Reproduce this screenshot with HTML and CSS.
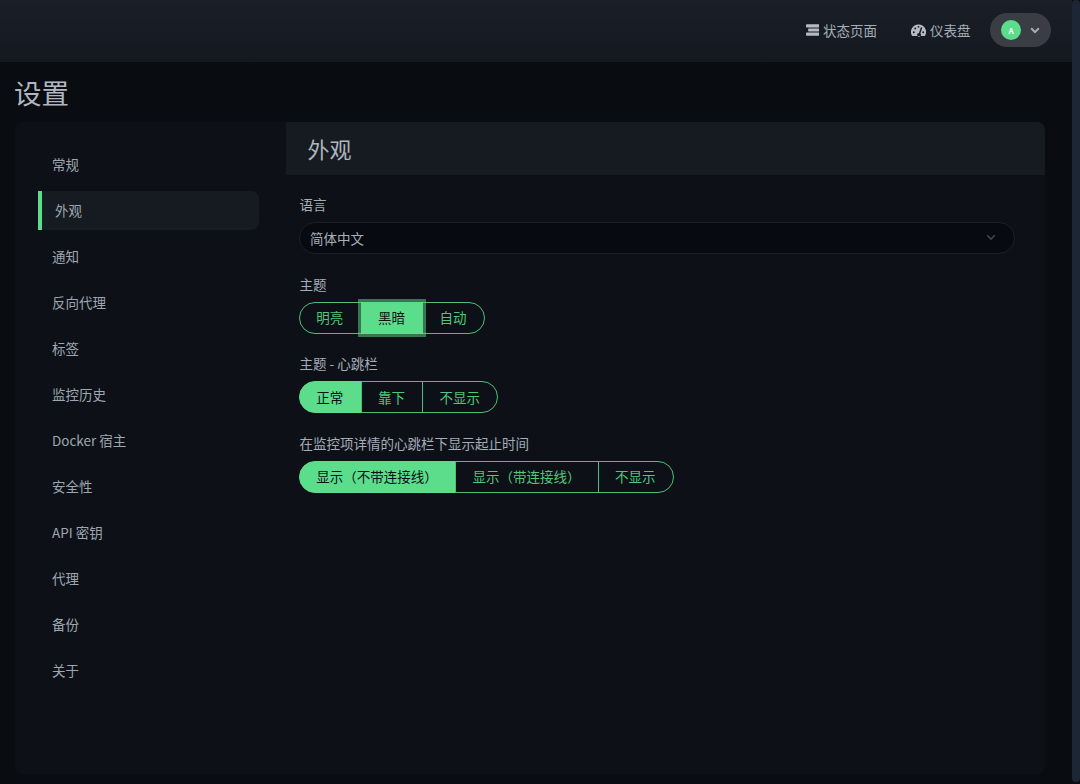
FILE: index.html
```html
<!DOCTYPE html>
<html lang="zh-CN">
<head>
<meta charset="utf-8">
<title>设置</title>
<link rel="stylesheet" href="styles.css">
</head>
<body>
<div class="app">
<header class="topbar">
  <a class="toplink"><svg class="icon" viewBox="0 0 14 12"><path d="M0.8 0H13.2a.8.8 0 0 1 .8.8v1.800a.8.8 0 0 1-.8.8H.8a.8.8 0 0 1-.8-.8V.8a.8.8 0 0 1 .8-.8zM3 4.400H13.200a.8.8 0 0 1 .8.8v1.600a.8.8 0 0 1-.8.8H3a.8.8 0 0 1-.8-.8V5.200a.8.8 0 0 1 .8-.8zM.8 8.600H13.200a.8.8 0 0 1 .8.8v1.800a.8.8 0 0 1-.8.8H.8a.8.8 0 0 1-.8-.8V9.400a.8.8 0 0 1 .8-.8z"/></svg>状态页面</a>
  <a class="toplink"><svg class="icon gauge" viewBox="0 0 16 14"><path fill-rule="evenodd" d="M8 1a8 8 0 0 0-6.900 12.050c.15.270.45.450.75.450h12.300c.3 0 .6-.180.750-.450A8 8 0 0 0 8 1zM8 2.600a1 1 0 1 1 0 2 1 1 0 0 1 0-2zM3 10.400a1 1 0 1 1 0-2 1 1 0 0 1 0 2zM4.500 6.400a1 1 0 1 1 0-2 1 1 0 0 1 0 2zM11.900 4.900l-1.900 5.700a2 2 0 1 1-1.500-.5l1.900-5.700a.8.8 0 0 1 1.500.5zM13 10.400a1 1 0 1 1 0-2 1 1 0 0 1 0 2z"/></svg>仪表盘</a>
  <div class="profile">
    <span class="avatar">A</span>
    <svg class="chev" viewBox="0 0 10 7"><path d="M1.200 1.300 5 5.100 8.800 1.300"/></svg>
  </div>
</header>

<main class="page">
  <h1 class="page-title">设置</h1>
  <section class="card">
    <nav class="side">
      <a class="side-item">常规</a>
      <a class="side-item active">外观</a>
      <a class="side-item">通知</a>
      <a class="side-item">反向代理</a>
      <a class="side-item">标签</a>
      <a class="side-item">监控历史</a>
      <a class="side-item">Docker 宿主</a>
      <a class="side-item">安全性</a>
      <a class="side-item">API 密钥</a>
      <a class="side-item">代理</a>
      <a class="side-item">备份</a>
      <a class="side-item">关于</a>
    </nav>
    <div class="content">
      <h2 class="content-head">外观</h2>
      <div class="form">
        <div class="field">
          <label class="label">语言</label>
          <div class="select">简体中文<svg class="select-chev" viewBox="0 0 10 7"><path d="M1.200 1.300 5 5.100 8.800 1.300"/></svg></div>
        </div>
        <div class="field">
          <label class="label">主题</label>
          <div class="group">
            <button class="btn">明亮</button>
            <button class="btn on focus">黑暗</button>
            <button class="btn">自动</button>
          </div>
        </div>
        <div class="field">
          <label class="label">主题 - 心跳栏</label>
          <div class="group">
            <button class="btn on">正常</button>
            <button class="btn">靠下</button>
            <button class="btn">不显示</button>
          </div>
        </div>
        <div class="field">
          <label class="label">在监控项详情的心跳栏下显示起止时间</label>
          <div class="group">
            <button class="btn on">显示（不带连接线）</button>
            <button class="btn">显示（带连接线）</button>
            <button class="btn">不显示</button>
          </div>
        </div>
      </div>
    </div>
  </section>
</main>
</div>
<div class="scrollbar"><div class="thumb"></div></div>
</body>
</html>
```
FILE: styles.css
```css
* { box-sizing: border-box; }
html { background: #090c10; }
body {
  margin: 0;
  height: 784px;
  overflow: hidden;
  display: flex;
  font-family: "Noto Sans CJK SC", "Noto Sans", sans-serif;
  font-size: 13.5px;
  color: #a5adb7;
  background: #090c10;
}
.app { flex: 1; min-width: 0; }
.scrollbar { width: 8px; background: #0d0e0f; padding-bottom: 2px; }
.thumb { height: 100%; background: #1c2634; border-radius: 5px; }
.topbar {
  height: 62px;
  background: linear-gradient(#1a1f27, #14181f);
  display: flex;
  align-items: center;
  justify-content: flex-end;
  padding: 0 21px 2px 0;
}
.toplink {
  display: flex;
  align-items: center;
  margin-right: 34px;
  color: #a5adb7;
  line-height: 20px;
}
.toplink:nth-child(2) { margin-right: 19.500px; }
.icon { width: 13.500px; height: 12px; margin-right: 4px; fill: #b4bbc4; }
.gauge { width: 15px; height: 14px; }
.profile {
  width: 61px;
  height: 34px;
  border-radius: 17px;
  background: #3a3e44;
  display: flex;
  align-items: center;
  padding-left: 11px;
}
.avatar {
  width: 20px;
  height: 20px;
  border-radius: 50%;
  background: #5cdd8b;
  color: #fff;
  font-size: 8px;
  font-weight: 700;
  display: flex;
  align-items: center;
  justify-content: center;
}
.chev { width: 10px; height: 7px; margin-left: 9px; fill: none; stroke: #a9aeb5; stroke-width: 2; }
.page { padding: 0 27px 0 15px; }
.page-title {
  margin: 0 0 0 -1px;
  height: 60px;
  font-size: 27.500px;
  font-weight: 400;
  line-height: 60px;
  color: #b0b7c0;
}
.card {
  height: 652px;
  background: #0d1117;
  border-radius: 8px;
  display: flex;
  overflow: hidden;
}
.side {
  width: 271px;
  padding: 23px 27px 0 23px;
  display: flex;
  flex-direction: column;
  gap: 7px;
}
.side-item {
  height: 39px;
  line-height: 39px;
  padding-left: 14px;
  color: #9ea6b0;
  border-radius: 0 8px 8px 0;
}
.side-item.active {
  background: #161b22;
  border-left: 4px solid #5cdd8b;
  padding-left: 13px;
}
.content { flex: 1; }
.content-head {
  margin: 0;
  height: 53px;
  padding-left: 21.500px;
  background: #161b22;
  font-size: 22px;
  font-weight: 400;
  line-height: 53px;
  color: #aeb5be;
}
.form { padding: 19px 30px 0 13px; }
.field { margin-bottom: 19.500px; }
.label {
  display: block;
  height: 28px;
  line-height: 20px;
  padding-left: .5px;
  color: #a5adb7;
}
.select {
  height: 32px;
  border: 1px solid #1c2128;
  border-radius: 16px;
  background: #070a10;
  padding: 0 18px 1px 10px;
  display: flex;
  align-items: center;
  justify-content: space-between;
  color: #a9b0ba;
}
.select-chev { width: 10px; height: 7px; fill: none; stroke: #3f454d; stroke-width: 1.600; }
.group { display: flex; height: 32px; }
.btn {
  height: 32px;
  padding: 0 17.300px 1px 16.300px;
  margin-left: -1px;
  border: 1px solid #4fbf78;
  background: transparent;
  color: #52c67d;
  font: inherit;
  line-height: 28px;
  white-space: nowrap;
}
.btn:first-child { margin-left: 0; border-radius: 16px 0 0 16px; }
.btn:last-child { border-radius: 0 16px 16px 0; }
.btn.on { background: #5cdd8b; border-color: #5cdd8b; color: #0d1117; }
.btn.focus { position: relative; box-shadow: 0 0 0 3px rgba(92, 221, 139, .5); }
```
